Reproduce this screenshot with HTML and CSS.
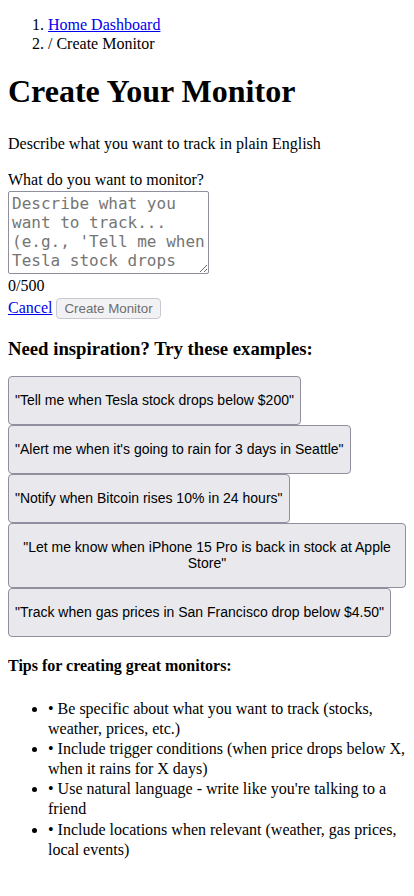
FILE: index.html
```html
<!DOCTYPE html>
<html lang="en">
<head>
<meta charset="utf-8">
<title>Create Your Monitor</title>
<link rel="stylesheet" href="styles.css">
</head>
<body>
<nav class="crumbs">
  <ol class="crumb-list">
    <li><a href="#">Home Dashboard</a></li>
    <li>/ Create Monitor</li>
  </ol>
</nav>
<h1 class="title">Create Your Monitor</h1>
<p class="lead">Describe what you want to track in plain English</p>
<form class="monitor-form">
  <label class="field-label" for="q">What do you want to monitor?</label>
  <textarea class="field" id="q" placeholder="Describe what you want to track... (e.g., 'Tell me when Tesla stock drops below $200')"></textarea>
  <div class="counter">0/500</div>
  <div class="actions"><a href="#">Cancel</a> <button type="button" class="submit" disabled>Create Monitor</button></div>
</form>
<h3 class="examples-title">Need inspiration? Try these examples:</h3>
<div class="examples">
  <button type="button" class="example">"Tell me when Tesla stock drops below $200"</button>
  <button type="button" class="example">"Alert me when it's going to rain for 3 days in Seattle"</button>
  <button type="button" class="example">"Notify when Bitcoin rises 10% in 24 hours"</button>
  <button type="button" class="example">"Let me know when iPhone 15 Pro is back in stock at Apple Store"</button>
  <button type="button" class="example">"Track when gas prices in San Francisco drop below $4.50"</button>
</div>
<h4 class="tips-title">Tips for creating great monitors:</h4>
<ul class="tips">
  <li>• Be specific about what you want to track (stocks, weather, prices, etc.)</li>
  <li>• Include trigger conditions (when price drops below X, when it rains for X days)</li>
  <li>• Use natural language - write like you're talking to a friend</li>
  <li>• Include locations when relevant (weather, gas prices, local events)</li>
</ul>
</body>
</html>
```
FILE: styles.css
```css
html, body {
  background: #fff;
}
body {
  margin: 8px;
  font-family: "Liberation Serif", "Times New Roman", serif;
  font-size: 16px;
  color: #000;
}
a {
  color: #0000ee;
  text-decoration: underline;
}
.crumbs {
  margin: 0;
}
.crumb-list {
  margin: 6.5px 0 0;
  padding-left: 40px;
}
.crumb-list li {
  line-height: 19px;
}
.title {
  font-size: 32px;
  font-weight: bold;
  margin: 20px 0 25px;
}
.lead {
  margin: 0 0 18.6px;
}
.monitor-form {
  margin: 0;
}
.field-label {
  display: block;
}
.field {
  display: block;
  box-sizing: border-box;
  width: 201px;
  height: 83px;
  margin: 2px 0 3px;
  padding: 2px 0 2px 3px;
  border: 1px solid #8f8f9d;
  border-radius: 2px;
  font-family: "DejaVu Sans Mono", "Liberation Mono", monospace;
  font-size: 16px;
  line-height: 19px;
  color: #000;
  background: #fff;
  overflow: hidden;
  resize: both;
}
.field::placeholder {
  color: #757575;
}
.counter {
  line-height: 18.4px;
}
.actions {
  margin-top: 2px;
}
.submit {
  font-family: "Liberation Sans", Arial, sans-serif;
  font-size: 13.33px;
  padding: 2px 7px;
  border: 1px solid #c8c8d0;
  border-radius: 4px;
  background: #f2f2f5;
  color: #6d6d6d;
  margin: 0;
}
.examples-title {
  font-size: 18.72px;
  font-weight: bold;
  margin: 19.6px 0 15.9px;
}
.examples {
  display: flex;
  flex-direction: column;
  align-items: flex-start;
  gap: 0;
}
.example {
  font-family: "Liberation Sans", Arial, sans-serif;
  font-size: 14px;
  line-height: 16px;
  padding: 15.5px 6px;
  margin: 0;
  border: 1px solid #8f8f9d;
  border-radius: 4px;
  background: #e9e9ed;
  color: #000;
  text-align: center;
  max-width: 100%;
}
.tips-title {
  font-size: 16px;
  font-weight: bold;
  margin: 20.3px 0 23.3px;
}
.tips {
  margin: 16px -8px 16px 0;
  padding-left: 40px;
}
.tips li {
  line-height: 20px;
  margin-bottom: 0.4px;
}
```
